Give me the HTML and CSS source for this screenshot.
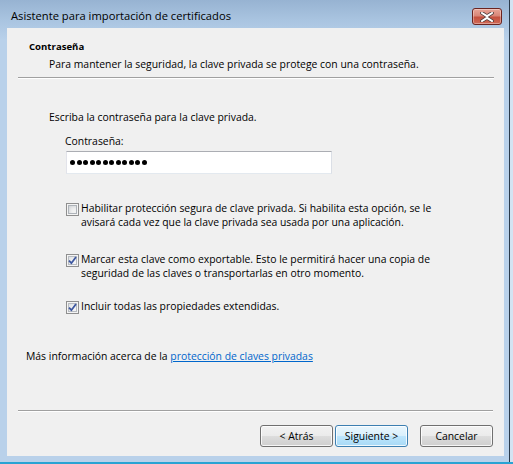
FILE: index.html
```html
<!DOCTYPE html>
<html lang="es">
<head>
<meta charset="utf-8">
<title>Asistente para importación de certificados</title>
<link rel="stylesheet" href="styles.css">
</head>
<body>
<div class="window">
  <div class="titlebar">
    <span class="title">Asistente para importación de certificados</span>
    <button class="close" aria-label="Cerrar">
      <svg width="14" height="10" viewBox="0 0 14 10">
        <path d="M2 1 L7 4.2 L12 1 M2 9 L7 5.8 L12 9" stroke="#4a3a3a" stroke-width="3.6" fill="none" stroke-linecap="square"/>
        <path d="M2 1 L7 4.2 L12 1 M2 9 L7 5.8 L12 9" stroke="#ffffff" stroke-width="2" fill="none" stroke-linecap="square"/>
      </svg>
    </button>
  </div>
  <div class="client">
    <div class="header">
      <div class="h-title">Contraseña</div>
      <div class="h-desc">Para mantener la seguridad, la clave privada se protege con una contraseña.</div>
    </div>
    <div class="sep sep-top"></div>
    <div class="content">
      <div class="prompt">Escriba la contraseña para la clave privada.</div>
      <div class="field">
        <div class="label">Contraseña:</div>
        <div class="input">
          <span class="dot"></span><span class="dot"></span><span class="dot"></span><span class="dot"></span><span class="dot"></span><span class="dot"></span><span class="dot"></span><span class="dot"></span><span class="dot"></span><span class="dot"></span><span class="dot"></span><span class="dot"></span>
        </div>
      </div>
      <div class="option opt1">
        <span class="cb"></span>
        <span class="opt-text">Habilitar protección segura de clave privada. Si habilita esta opción, se le avisará cada vez que la clave privada sea usada por una aplicación.</span>
      </div>
      <div class="option opt2">
        <span class="cb checked"><svg width="9" height="9" viewBox="0 0 9 9"><path d="M1 4.6 L3.4 7.2 L8 1" stroke="#3d57a0" stroke-width="1.8" fill="none"/></svg></span>
        <span class="opt-text">Marcar esta clave como exportable. Esto le permitirá hacer una copia de seguridad de las claves o transportarlas en otro momento.</span>
      </div>
      <div class="option opt3">
        <span class="cb checked"><svg width="9" height="9" viewBox="0 0 9 9"><path d="M1 4.6 L3.4 7.2 L8 1" stroke="#3d57a0" stroke-width="1.8" fill="none"/></svg></span>
        <span class="opt-text">Incluir todas las propiedades extendidas.</span>
      </div>
    </div>
    <div class="more">Más información acerca de la <a href="#" class="link">protección de claves privadas</a></div>
    <div class="sep sep-bottom"></div>
    <div class="buttons">
      <button class="btn">&lt; Atrás</button>
      <button class="btn default">Siguiente &gt;</button>
      <button class="btn cancel">Cancelar</button>
    </div>
  </div>
</div>
</body>
</html>
```
FILE: styles.css
```css
* { box-sizing: border-box; }
html, body { margin: 0; padding: 0; }
body {
  width: 513px;
  height: 464px;
  background: linear-gradient(to bottom, #d3e3f2 0px, #d3e3f2 462px, #29a3d3 462px, #29a3d3 100%);
  font-family: "Open Sans", "Noto Sans", sans-serif;
  font-size: 10.4px;
  color: #000;
  overflow: hidden;
}
.window {
  width: 510px;
  height: 462px;
  border-right: 1px solid #2b3a4a;
  background: linear-gradient(to bottom, #97b3d2 0px, #a9c4e0 20px, #b9d1ea 40px, #b9d1ea 100%);
  display: flex;
  flex-direction: column;
  padding: 0 5px 6px 7px;
}
.titlebar {
  height: 28px;
  display: flex;
  align-items: flex-start;
  justify-content: space-between;
  flex-shrink: 0;
}
.title {
  font-size: 11.2px;
  line-height: 16px;
  margin-top: 8px;
  margin-left: 4px;
}
.close {
  margin-top: 8px;
  margin-right: 2px;
  width: 30px;
  height: 17px;
  padding: 0;
  border: 1px solid #6b2420;
  border-radius: 3px;
  background: linear-gradient(to bottom, #e8a497 0%, #d98678 45%, #c5503e 55%, #cf6a58 100%);
  box-shadow: inset 0 0 0 1px rgba(255,255,255,0.35);
  display: flex;
  align-items: center;
  justify-content: center;
}
.client {
  flex: 1;
  background: #f0f0f0;
  display: flex;
  flex-direction: column;
}
.header {
  padding: 11px 0 0 22px;
}
.h-title {
  font-weight: bold;
  font-size: 9.6px;
  line-height: 15px;
}
.h-desc {
  margin-left: 20px;
  margin-top: 3px;
  line-height: 15px;
}
.sep {
  height: 2px;
  border-top: 1px solid #a0a0a0;
  border-bottom: 1px solid #ffffff;
  margin-left: 11px;
  margin-right: 10px;
}
.sep-top { margin-top: 5px; }
.content {
  padding-left: 42px;
}
.prompt {
  margin-top: 31px;
  line-height: 15px;
}
.field {
  margin-left: 16px;
}
.label {
  margin-top: 9px;
  line-height: 15px;
}
.input {
  margin-top: 2px;
  margin-left: 1px;
  width: 266px;
  height: 23px;
  background: #fff;
  border: 1px solid #abadb3;
  border-left-color: #e2e3ea;
  border-right-color: #dbdfe6;
  border-bottom-color: #e3e9ef;
  display: flex;
  align-items: center;
  gap: 1.5px;
  padding-left: 3px;
}
.dot {
  width: 5px;
  height: 5px;
  border-radius: 50%;
  background: #000;
}
.option {
  display: flex;
  align-items: flex-start;
  margin-left: 17px;
  line-height: 14px;
  padding-right: 40px;
}
.opt1 { margin-top: 27px; }
.opt2 { margin-top: 23px; }
.opt3 { margin-top: 19px; }
.cb {
  flex-shrink: 0;
  width: 13px;
  height: 13px;
  margin-top: 2px;
  margin-right: 2px;
  border: 1px solid #8f8f8f;
  background: #f4f4f4;
  box-shadow: inset 0 0 0 1px #f4f4f4, inset 0 0 0 2px #aeb3b9, inset 2px 2px 5px #c4c8cc;
  display: flex;
  align-items: center;
  justify-content: center;
}
.cb.checked {
  box-shadow: inset 0 0 0 1px #f4f4f4, inset 0 0 0 2px #b8bcc2, inset 2px 2px 5px #d4d8dc;
  background: #f6f6f6;
}
.more {
  margin-top: 35px;
  margin-left: 19px;
  line-height: 14px;
}
.link {
  color: #0066cc;
  text-decoration: underline;
}
.sep-bottom {
  margin-top: 47px;
  margin-right: 11px;
}
.buttons {
  display: flex;
  justify-content: flex-end;
  margin-top: 13px;
  margin-right: 11px;
}
.btn {
  width: 73px;
  height: 22px;
  margin-left: 2px;
  padding: 0;
  font-family: "Open Sans", "Noto Sans", sans-serif;
  font-size: 10.4px;
  color: #000;
  border: 1px solid #707070;
  border-radius: 3px;
  background: linear-gradient(to bottom, #f2f2f2 0%, #ebebeb 49%, #dddddd 50%, #cfcfcf 100%);
  box-shadow: inset 0 0 0 1px rgba(255,255,255,0.8);
}
.btn.default {
  border-color: #3c7fb1;
  background: linear-gradient(to bottom, #eaf6fd 0%, #d9f0fc 49%, #bee6fd 50%, #a7d9f5 100%);
  box-shadow: inset 0 0 0 1px rgba(255,255,255,0.8);
}
.btn.cancel { margin-left: 12px; }
```
